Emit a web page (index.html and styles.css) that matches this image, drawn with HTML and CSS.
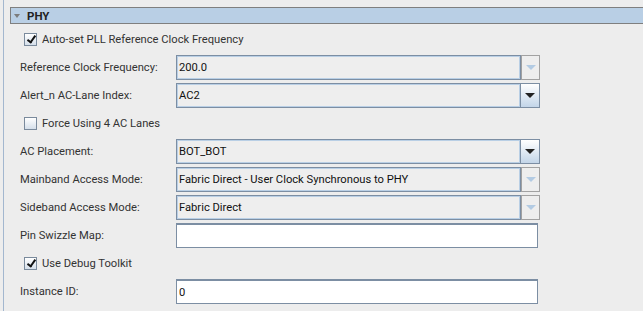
FILE: index.html
```html
<!DOCTYPE html>
<html lang="en">

<head>
    <meta charset="UTF-8">
    <title>PHY</title>
    <link rel="stylesheet" href="styles.css">
</head>

<body>
    <div class="panel">
        <div class="section-header">
            <span class="caret"></span>
            PHY
        </div>

        <div class="form">
            <!-- PLL clock -->
            <label class="check-row">
                <span class="box checked"></span>
                Auto-set PLL Reference Clock Frequency
            </label>

            <div class="row">
                <span class="label">Reference Clock Frequency:</span>
                <div class="combo disabled">
                    <span class="combo-value">200.0</span>
                    <span class="combo-button"><span class="arrow"></span></span>
                </div>
            </div>

            <div class="row">
                <span class="label">Alert_n AC-Lane Index:</span>
                <div class="combo">
                    <span class="combo-value">AC2</span>
                    <span class="combo-button"><span class="arrow"></span></span>
                </div>
            </div>

            <label class="check-row">
                <span class="box"></span>
                Force Using 4 AC Lanes
            </label>

            <!-- placement / access -->
            <div class="row">
                <span class="label">AC Placement:</span>
                <div class="combo">
                    <span class="combo-value">BOT_BOT</span>
                    <span class="combo-button"><span class="arrow"></span></span>
                </div>
            </div>

            <div class="row">
                <span class="label">Mainband Access Mode:</span>
                <div class="combo disabled">
                    <span class="combo-value">Fabric Direct - User Clock Synchronous to PHY</span>
                    <span class="combo-button"><span class="arrow"></span></span>
                </div>
            </div>

            <div class="row">
                <span class="label">Sideband Access Mode:</span>
                <div class="combo disabled">
                    <span class="combo-value">Fabric Direct</span>
                    <span class="combo-button"><span class="arrow"></span></span>
                </div>
            </div>

            <div class="row">
                <span class="label">Pin Swizzle Map:</span>
                <input type="text" class="field" value="">
            </div>

            <label class="check-row">
                <span class="box checked"></span>
                Use Debug Toolkit
            </label>

            <div class="row">
                <span class="label">Instance ID:</span>
                <input type="text" class="field" value="0">
            </div>
        </div>
    </div>
</body>

</html>
```

FILE: styles.css
```css
body {
    font-family: Roboto, "Liberation Sans", sans-serif;
    font-size: 11.2px;
    color: #333;
    background-color: #ededed;
    margin: 0;
    padding: 0 0 0 3px;
}

.panel {
    border-left: 1px solid #a3b7cf;
    padding: 7px 0 0 6px;
    height: 304px;
}

.section-header {
    display: flex;
    align-items: center;
    height: 15px;
    border: 1px solid #7f7f7f;
    border-right: none;
    background-color: #b9cfe5;
    font-weight: bold;
    font-size: 11.5px;
    color: #222;
    padding-left: 3px;
}

.caret {
    width: 0;
    height: 0;
    border-left: 3px solid transparent;
    border-right: 3px solid transparent;
    border-top: 4px solid #7c7c7c;
    margin-right: 7px;
}

.form {
    padding: 3px 0 0 10px;
}

.row {
    display: flex;
    align-items: center;
    height: 25px;
    margin-bottom: 3px;
}

.label {
    width: 156px;
}

.check-row {
    display: flex;
    align-items: center;
    height: 25px;
    margin-bottom: 3px;
    padding-left: 4px;
}

.box {
    position: relative;
    width: 11px;
    height: 11px;
    border: 1px solid #7a8a9c;
    background: linear-gradient(#ffffff, #d5dfea);
    margin-right: 5px;
}

.box.checked::after {
    content: "";
    position: absolute;
    left: 4px;
    top: 0;
    width: 3px;
    height: 7px;
    border-right: 2px solid #111;
    border-bottom: 2px solid #111;
    transform: rotate(35deg);
}

.combo {
    display: flex;
    width: 364px;
    height: 25px;
}

.combo-value {
    flex: 1;
    display: flex;
    align-items: center;
    padding-left: 2px;
    background-color: #eeeeee;
    border: 1px solid #7c8ea3;
    box-shadow: inset 0 0 0 1px #b9cfe5;
    color: #111;
}

.combo-button {
    width: 18px;
    display: flex;
    align-items: center;
    justify-content: center;
    border: 1px solid #7c8ea3;
    border-left: none;
    background: linear-gradient(#ffffff, #c3d5e8);
}

.arrow {
    width: 0;
    height: 0;
    border-left: 5px solid transparent;
    border-right: 5px solid transparent;
    border-top: 5px solid #222;
}

.combo.disabled .combo-button {
    border-color: #a2a2a2;
    border-left: 1px solid #a2a2a2;
    width: 17px;
    background: #eeeeee;
}

.combo.disabled .arrow {
    border-top-color: #b3cbe3;
}

.field {
    width: 362px;
    height: 25px;
    box-sizing: border-box;
    margin: 0;
    padding: 1px 2px 0;
    border: 1px solid #7c8ea3;
    border-top-width: 2px;
    background-color: #fff;
    font-family: Roboto, "Liberation Sans", sans-serif;
    font-size: 11.2px;
    color: #111;
    outline: none;
}
```
